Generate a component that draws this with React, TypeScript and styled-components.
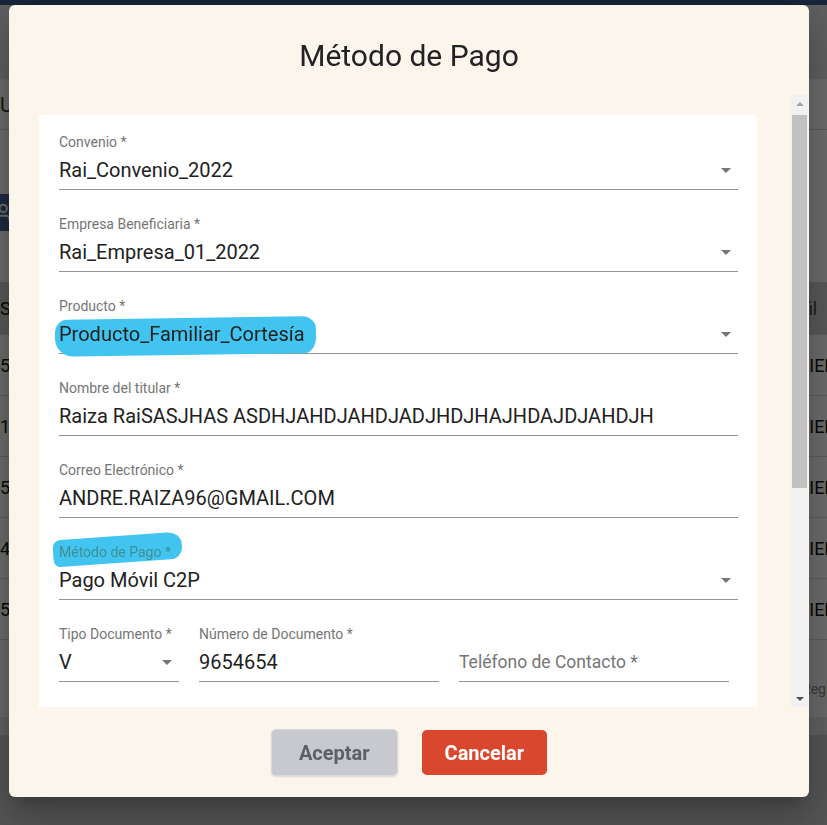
import React from 'react';
import styled, { createGlobalStyle } from 'styled-components';
import { UserPlus } from 'lucide-react';

const GlobalStyle = createGlobalStyle`
  html, body { margin: 0; padding: 0; }
  body { font-family: Roboto, "Noto Sans", Arial, sans-serif; overflow: hidden; }
  * { box-sizing: border-box; }
`;

/* ---------- underlying page (dimmed by the overlay) ---------- */
const Page = styled.div`
  width: 827px;
  height: 825px;
  background: #ffffff;
  display: flex;
  flex-direction: column;
  overflow: hidden;
  color: #111;
`;
const NavBar = styled.div`
  height: 5px;
  flex: none;
  background: #37568a;
`;
const SubHeader = styled.div`
  height: 75px;
  flex: none;
  background: #e2e2e2;
  border-bottom: 1px solid #f4f4f4;
`;
const Toolbar = styled.div`
  height: 50px;
  flex: none;
  display: flex;
  align-items: center;
  font-size: 20px;
  color: #333;
  border-bottom: 1px solid #d6d6d6;
`;
const Actions = styled.div`
  height: 152px;
  flex: none;
  display: flex;
  align-items: flex-start;
  padding-top: 64px;
`;
const ActionButton = styled.div`
  width: 40px;
  height: 37px;
  margin-left: -14px;
  background: #40649a;
  color: #fff;
  display: flex;
  align-items: center;
  justify-content: center;
  border-radius: 3px;
`;
const TableRow = styled.div<{ $head?: boolean }>`
  height: ${(p) => (p.$head ? 53 : 61)}px;
  flex: none;
  display: grid;
  grid-template-columns: 763px 1fr;
  align-items: center;
  font-size: 18px;
  background: ${(p) => (p.$head ? '#d2d2d2' : '#ffffff')};
  border-bottom: 1px solid #dcdcdc;
  white-space: nowrap;
  overflow: hidden;
`;
const Cell = styled.div<{ $pad?: number }>`
  padding-left: ${(p) => p.$pad ?? 0}px;
  color: ${(p) => (p.$pad ? '#444' : '#111')};
`;
const Pagination = styled.div`
  height: 95px;
  flex: none;
  display: flex;
  align-items: center;
  padding-left: 802px;
  padding-top: 20px;
  font-size: 14px;
  color: #888;
  white-space: nowrap;
  background: #fafafa;
  border-bottom: 18px solid #e6e6e6;
`;
const PageBottom = styled.div`
  flex: 1;
  background: #c9c9c9;
`;

/* ---------- overlay + modal ---------- */
const Overlay = styled.div`
  position: fixed;
  inset: 0;
  background: rgba(0, 0, 0, 0.58);
  display: flex;
  align-items: flex-start;
  justify-content: flex-start;
  padding: 5px 0 0 9px;
`;
const Modal = styled.div`
  width: 800px;
  height: 792px;
  background: #fcf5eb;
  border-radius: 6px;
  box-shadow: 0 11px 15px -7px rgba(0, 0, 0, 0.2), 0 24px 38px 3px rgba(0, 0, 0, 0.14),
    0 9px 46px 8px rgba(0, 0, 0, 0.12);
  display: flex;
  flex-direction: column;
  overflow: hidden;
`;
const Title = styled.h2`
  margin: 0;
  height: 90px;
  flex: none;
  padding-top: 10px;
  display: flex;
  align-items: center;
  justify-content: center;
  font-family: Roboto, sans-serif;
  font-weight: 400;
  font-size: 30px;
  color: #222;
`;
const ScrollRegion = styled.div`
  height: 612px;
  flex: none;
  margin-right: 1px;
  display: flex;
`;
const ScrollArea = styled.div`
  flex: 1;
  overflow-y: auto;
  scrollbar-width: none;
  padding: 20px 34px 20px 30px;
  &::-webkit-scrollbar {
    display: none;
  }
`;
const ScrollBar = styled.div`
  width: 17px;
  flex: none;
  background: #f1f1f1;
  display: flex;
  flex-direction: column;
`;
const ScrollButton = styled.div`
  height: 17px;
  flex: none;
  display: flex;
  align-items: center;
  justify-content: center;
`;
const ScrollArrow = styled.span<{ $dir: 'up' | 'down'; $active?: boolean }>`
  width: 0;
  height: 0;
  border-left: 4px solid transparent;
  border-right: 4px solid transparent;
  ${(p) =>
    p.$dir === 'up'
      ? `border-bottom: 4px solid ${p.$active ? '#505050' : '#a3a3a3'};`
      : `border-top: 4px solid ${p.$active ? '#505050' : '#a3a3a3'};`}
`;
const Track = styled.div`
  flex: 1;
  padding-top: 3px;
`;
const Thumb = styled.div`
  height: 373px;
  margin: 0 1px;
  background: #c1c1c1;
`;
const Card = styled.div`
  background: #ffffff;
  border-radius: 4px;
  padding: 19px 19px 20px 20px;
`;
const Field = styled.div<{ $w?: number }>`
  margin-bottom: 26px;
  width: ${(p) => (p.$w ? `${p.$w}px` : 'auto')};
  flex: none;
`;
const Label = styled.div<{ $marked?: boolean }>`
  display: block;
  height: 16px;
  font-size: 14px;
  line-height: 16px;
  color: ${(p) => (p.$marked ? '#3f8f95' : '#757575')};
  white-space: nowrap;
`;
const Control = styled.div`
  display: flex;
  align-items: center;
  margin-top: 8px;
  height: 32px;
  padding-bottom: 7px;
  border-bottom: 1px solid #949494;
`;
const Value = styled.div<{ $placeholder?: boolean }>`
  flex: 1;
  font-size: ${(p) => (p.$placeholder ? 17.5 : 20)}px;
  line-height: 24px;
  color: ${(p) => (p.$placeholder ? '#757575' : '#212121')};
  white-space: nowrap;
`;
const Arrow = styled.span`
  flex: none;
  width: 0;
  height: 0;
  margin-right: 7px;
  border-left: 5px solid transparent;
  border-right: 5px solid transparent;
  border-top: 5px solid #757575;
`;
const Marked = styled.span<{ $tilt: number }>`
  position: relative;
  display: inline-block;
  isolation: isolate;
  &::before {
    content: '';
    position: absolute;
    z-index: -1;
    background: #41c4ef;
    transform: rotate(${(p) => p.$tilt}deg);
  }
`;
const MarkedValue = styled(Marked)`
  line-height: 24px;
  &::before {
    left: -4px;
    right: -11px;
    top: -4px;
    bottom: -9px;
    border-radius: 12px 14px 12px 18px / 14px 12px 16px 18px;
  }
`;
const MarkedLabel = styled(Marked)`
  line-height: 16px;
  &::before {
    left: -6px;
    right: -11px;
    top: -8px;
    bottom: -3px;
    border-radius: 8px 14px 12px 6px / 8px 12px 12px 8px;
  }
`;
const Row = styled.div`
  display: flex;
  gap: 20px;
`;
const Footer = styled.div`
  height: 90px;
  flex: none;
  display: flex;
  justify-content: center;
  align-items: flex-start;
  gap: 24px;
  padding-top: 22px;
`;
const Button = styled.button<{ $variant: 'accept' | 'cancel' }>`
  height: ${(p) => (p.$variant === 'accept' ? 47 : 45)}px;
  margin-top: ${(p) => (p.$variant === 'accept' ? 0 : 1)}px;
  padding: 0 ${(p) => (p.$variant === 'accept' ? 27 : 23)}px;
  border-radius: 5px;
  font-family: Roboto, sans-serif;
  font-size: 20px;
  font-weight: 700;
  cursor: pointer;
  border: ${(p) => (p.$variant === 'accept' ? '1px solid #d9dadd' : 'none')};
  background: ${(p) => (p.$variant === 'accept' ? '#c8c9ce' : '#d9472f')};
  color: ${(p) => (p.$variant === 'accept' ? '#5e6065' : '#ffffff')};
  box-shadow: ${(p) => (p.$variant === 'accept' ? '0 1px 2px rgba(0,0,0,0.12)' : 'none')};
`;

type FieldDef = { label: string; value: string; select?: boolean };

const fields: FieldDef[] = [
  { label: 'Convenio *', value: 'Rai_Convenio_2022', select: true },
  { label: 'Empresa Beneficiaria *', value: 'Rai_Empresa_01_2022', select: true },
];
const fieldsAfter: FieldDef[] = [
  { label: 'Nombre del titular *', value: 'Raiza RaiSASJHAS ASDHJAHDJAHDJADJHDJHAJHDAJDJAHDJH' },
  { label: 'Correo Electrónico *', value: 'ANDRE.RAIZA96@GMAIL.COM' },
];
const hidden: FieldDef[] = [
  { label: 'Banco *', value: 'Banco de Venezuela', select: true },
  { label: 'Teléfono del Pagador *', value: '04141234567' },
  { label: 'Clave de Pago *', value: '123456' },
  { label: 'Monto *', value: '0,00' },
];

const TextField = ({ label, value, select }: FieldDef) => (
  <Field>
    <Label>{label}</Label>
    <Control>
      <Value>{value}</Value>
      {select && <Arrow />}
    </Control>
  </Field>
);

const rows = ['5654654', '1234567', '5567890', '4512345', '5489123'];

export default function App() {
  return (
    <>
      <GlobalStyle />
      <Page>
        <NavBar />
        <SubHeader />
        <Toolbar>Usuarios</Toolbar>
        <Actions>
          <ActionButton>
            <UserPlus size={22} strokeWidth={2.2} />
          </ActionButton>
        </Actions>
        <TableRow $head>
          <Cell>Serial</Cell>
          <Cell $pad={13}>Perfil</Cell>
        </TableRow>
        {rows.map((r) => (
          <TableRow key={r}>
            <Cell>{r}</Cell>
            <Cell>PENDIENTE</Cell>
          </TableRow>
        ))}
        <Pagination>Registros por página</Pagination>
        <PageBottom />
      </Page>
      <Overlay>
        <Modal>
          <Title>Método de Pago</Title>
          <ScrollRegion>
            <ScrollArea>
              <Card>
                {fields.map((f) => (
                  <TextField key={f.label} {...f} />
                ))}
                <Field>
                  <Label>Producto *</Label>
                  <Control>
                    <Value>
                      <MarkedValue $tilt={-0.8}>Producto_Familiar_Cortesía</MarkedValue>
                    </Value>
                    <Arrow />
                  </Control>
                </Field>
                {fieldsAfter.map((f) => (
                  <TextField key={f.label} {...f} />
                ))}
                <Field>
                  <Label $marked>
                    <MarkedLabel $tilt={-4}>Método de Pago *</MarkedLabel>
                  </Label>
                  <Control>
                    <Value>Pago Móvil C2P</Value>
                    <Arrow />
                  </Control>
                </Field>
                <Row>
                  <Field $w={120}>
                    <Label>Tipo Documento *</Label>
                    <Control>
                      <Value>V</Value>
                      <Arrow />
                    </Control>
                  </Field>
                  <Field $w={240}>
                    <Label>Número de Documento *</Label>
                    <Control>
                      <Value>9654654</Value>
                    </Control>
                  </Field>
                  <Field $w={270}>
                    <Label />
                    <Control>
                      <Value $placeholder>Teléfono de Contacto *</Value>
                    </Control>
                  </Field>
                </Row>
                {hidden.map((f) => (
                  <TextField key={f.label} {...f} />
                ))}
              </Card>
            </ScrollArea>
            <ScrollBar aria-hidden>
              <ScrollButton>
                <ScrollArrow $dir="up" />
              </ScrollButton>
              <Track>
                <Thumb />
              </Track>
              <ScrollButton>
                <ScrollArrow $dir="down" $active />
              </ScrollButton>
            </ScrollBar>
          </ScrollRegion>
          <Footer>
            <Button $variant="accept">Aceptar</Button>
            <Button $variant="cancel">Cancelar</Button>
          </Footer>
        </Modal>
      </Overlay>
    </>
  );
}
